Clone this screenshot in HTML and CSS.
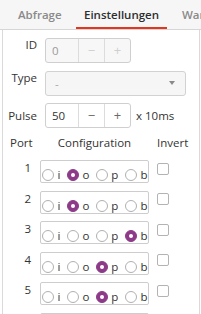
FILE: index.html
```html
<!DOCTYPE html>
<html>
<head>
<meta charset="utf-8">
<link rel="stylesheet" href="styles.css">
</head>
<body>
<div class="tabs">
  <div class="tab first">Abfrage</div>
  <div class="tab active">Einstellungen</div>
  <div class="tab last">Warnungen</div>
</div>
<div class="panel">
  <div class="form">
    <div class="frow">
      <div class="flabel up">ID</div>
      <div class="spin disabled">
        <div class="sval">0</div>
        <div class="sbtn">−</div>
        <div class="sbtn">+</div>
      </div>
    </div>
    <div class="frow">
      <div class="flabel up">Type</div>
      <div class="combo">
        <span class="cval">-</span>
        <span class="carrow"></span>
      </div>
    </div>
    <div class="frow">
      <div class="flabel mid">Pulse</div>
      <div class="spin">
        <div class="sval">50</div>
        <div class="sbtn">−</div>
        <div class="sbtn">+</div>
      </div>
      <div class="unit">x 10ms</div>
    </div>
  </div>

  <div class="thead">
    <div class="h-port">Port</div>
    <div class="h-conf">Configuration</div>
    <div class="h-inv">Invert</div>
  </div>

  <div class="ports">
    <div class="prow">
      <div class="num">1</div>
      <div class="group">
        <span class="ritem"><span class="radio"></span>i</span>
        <span class="ritem"><span class="radio on"></span>o</span>
        <span class="ritem"><span class="radio"></span>p</span>
        <span class="ritem"><span class="radio"></span>b</span>
      </div>
      <div class="check"></div>
    </div>
    <div class="prow">
      <div class="num">2</div>
      <div class="group">
        <span class="ritem"><span class="radio"></span>i</span>
        <span class="ritem"><span class="radio on"></span>o</span>
        <span class="ritem"><span class="radio"></span>p</span>
        <span class="ritem"><span class="radio"></span>b</span>
      </div>
      <div class="check"></div>
    </div>
    <div class="prow">
      <div class="num">3</div>
      <div class="group">
        <span class="ritem"><span class="radio"></span>i</span>
        <span class="ritem"><span class="radio"></span>o</span>
        <span class="ritem"><span class="radio"></span>p</span>
        <span class="ritem"><span class="radio on"></span>b</span>
      </div>
      <div class="check"></div>
    </div>
    <div class="prow">
      <div class="num">4</div>
      <div class="group">
        <span class="ritem"><span class="radio"></span>i</span>
        <span class="ritem"><span class="radio"></span>o</span>
        <span class="ritem"><span class="radio on"></span>p</span>
        <span class="ritem"><span class="radio"></span>b</span>
      </div>
      <div class="check"></div>
    </div>
    <div class="prow">
      <div class="num">5</div>
      <div class="group">
        <span class="ritem"><span class="radio"></span>i</span>
        <span class="ritem"><span class="radio"></span>o</span>
        <span class="ritem"><span class="radio on"></span>p</span>
        <span class="ritem"><span class="radio"></span>b</span>
      </div>
      <div class="check"></div>
    </div>
    <div class="prow">
      <div class="num"></div>
      <div class="group"></div>
      <div></div>
    </div>
  </div>
</div>
</body>
</html>
```

FILE: styles.css
```css
html, body {
  margin: 0;
  padding: 0;
}
body {
  width: 201px;
  height: 314px;
  overflow: hidden;
  background: #ffffff;
  font-family: "Open Sans", "Noto Sans", sans-serif;
  font-size: 11.5px;
  color: #333333;
}

.tabs {
  display: flex;
  height: 29px;
  background: #f6f6f6;
  border-bottom: 1px solid #d6d6d6;
  padding-left: 8px;
  white-space: nowrap;
  overflow: hidden;
}
.tab {
  line-height: 29px;
  font-weight: 600;
  color: #8a8a8a;
  flex: none;
}
.tab.first {
  width: 68px;
  box-sizing: border-box;
  padding-left: 10px;
}
.tab.active {
  width: 91px;
  text-align: center;
  color: #2e2e2e;
  box-shadow: inset 0 -2px 0 #e4351f;
}
.tab.last {
  padding-left: 15px;
}

.panel {
  margin: 0 1px 0 2px;
  border-left: 1px solid #dadada;
  border-right: 1px solid #dadada;
  height: 284px;
  overflow: hidden;
}

.form {
  padding-top: 8px;
  display: flex;
  flex-direction: column;
  gap: 7.5px;
}
.frow {
  display: flex;
  align-items: flex-start;
}
.flabel {
  width: 34px;
  margin-right: 8px;
  text-align: right;
  line-height: 16px;
}
.flabel.up { margin-top: -1px; }
.flabel.mid { margin-top: 4.5px; }

.spin {
  display: flex;
  width: 86px;
  height: 25px;
  box-sizing: border-box;
  border: 1px solid #cfcfcf;
  border-radius: 3px;
  background: #ffffff;
}
.spin.disabled {
  background: #f7f7f7;
  color: #9a9a9a;
}
.sval {
  width: 33px;
  padding-left: 6px;
  box-sizing: border-box;
  line-height: 23px;
}
.sbtn {
  width: 26px;
  border-left: 1px solid #dcdcdc;
  text-align: center;
  line-height: 23px;
  color: #6a6a6a;
  font-size: 13px;
}
.spin.disabled .sbtn {
  color: #cfcfcf;
}

.combo {
  display: flex;
  align-items: center;
  justify-content: space-between;
  width: 141px;
  height: 25px;
  box-sizing: border-box;
  border: 1px solid #d2d2d2;
  border-radius: 3px;
  background: #f6f6f6;
  padding: 0 10px 0 9px;
}
.cval {
  color: #a8a8a8;
}
.carrow {
  width: 0;
  height: 0;
  border-left: 3.5px solid transparent;
  border-right: 3.5px solid transparent;
  border-top: 4px solid #8a8a8a;
}

.unit {
  margin-left: 5px;
  line-height: 25px;
}

.thead {
  display: grid;
  grid-template-columns: 37px 109px 1fr;
  margin-top: 6.5px;
  line-height: 16px;
}
.h-port {
  padding-left: 7px;
}
.h-conf {
  text-align: center;
}
.h-inv {
  padding-left: 8px;
}

.ports {
  margin-top: 9.5px;
  display: flex;
  flex-direction: column;
  gap: 7.5px;
}
.prow {
  display: grid;
  grid-template-columns: 37px 109px 1fr;
  align-items: start;
}
.num {
  text-align: right;
  padding-right: 9px;
  line-height: 16px;
}
.group {
  height: 23px;
  box-sizing: border-box;
  border: 1px solid #cdcdcd;
  border-radius: 2px;
  padding: 7px 0 0 1px;
  display: flex;
  align-items: center;
  gap: 6.5px;
}
.ritem {
  display: flex;
  align-items: center;
  line-height: 12px;
  height: 12px;
}
.radio {
  width: 12px;
  height: 12px;
  box-sizing: border-box;
  border: 1px solid #b0b0b0;
  border-radius: 50%;
  background: #ffffff;
  margin-right: 3.5px;
  display: flex;
  align-items: center;
  justify-content: center;
}
.radio.on {
  background: #8d3b88;
  border-color: #8d3b88;
}
.radio.on::after {
  content: "";
  width: 4px;
  height: 4px;
  border-radius: 50%;
  background: #ffffff;
}
.check {
  margin: 2.5px 0 0 8px;
  width: 12px;
  height: 12px;
  box-sizing: border-box;
  border: 1px solid #b3b3b3;
  border-radius: 2px;
  background: #ffffff;
}
```
